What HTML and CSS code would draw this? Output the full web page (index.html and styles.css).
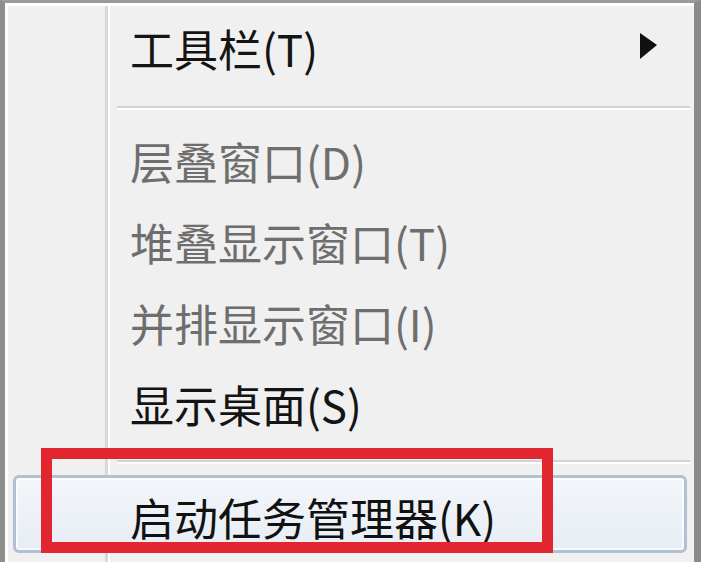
FILE: index.html
```html
<!DOCTYPE html>
<html lang="zh-CN">
<head>
<meta charset="utf-8">
<title>任务栏菜单</title>
<link rel="stylesheet" href="styles.css">
</head>
<body>
<div class="menu">
  <div class="item first">
    <span class="label">工具栏(T)</span>
    <svg class="arrow" width="20" height="30" viewBox="0 0 20 30"><polygon points="2,2 19,14 2,28" fill="#111"/></svg>
  </div>
  <div class="sep"><div class="line"></div></div>
  <div class="item disabled"><span class="label">层叠窗口(D)</span></div>
  <div class="item disabled"><span class="label">堆叠显示窗口(T)</span></div>
  <div class="item disabled"><span class="label">并排显示窗口(I)</span></div>
  <div class="item"><span class="label">显示桌面(S)</span></div>
  <div class="sep sep2"><div class="line"></div></div>
  <div class="item hover"><span class="label">启动任务管理器(K)</span></div>
  <div class="mark"></div>
</div>
</body>
</html>
```

FILE: styles.css
```css
html, body {
  margin: 0;
  padding: 0;
  width: 701px;
  height: 562px;
  overflow: hidden;
  background: #f0f0f0;
}

.menu {
  position: relative;
  box-sizing: border-box;
  width: 701px;
  height: 562px;
  overflow: hidden;
  border-left: 5px solid #8e8e8e;
  border-top: 3px solid #9a9a9a;
  border-right: 7px solid #8a8a8a;
  padding-top: 3px;
  box-shadow: inset 3px 3px 0 #ffffff;
  background:
    linear-gradient(to right,
      transparent 0, transparent 100px,
      #d9d9d9 100px, #d9d9d9 103px,
      #ffffff 103px, #ffffff 105px,
      transparent 105px),
    #f0f0f0;
  font-family: "Noto Sans CJK SC", "Noto Sans", sans-serif;
  font-size: 44px;
  color: #141414;
  display: flex;
  flex-direction: column;
}

.item {
  height: 81px;
  display: flex;
  align-items: center;
  padding-left: 125px;
  padding-right: 30px;
  box-sizing: border-box;
  flex: none;
}

.item.first {
  height: 84px;
  justify-content: space-between;
}

.label {
  line-height: 1;
  white-space: nowrap;
}

.arrow {
  display: block;
  margin-right: 6px;
  margin-top: -4px;
}

.disabled {
  color: #6e6e6e;
}

.sep {
  flex: none;
  padding: 16px 4px 10px 112px;
}

.sep2 {
  padding-bottom: 11px;
}

.line {
  height: 2px;
  background: #d4d4d4;
  border-bottom: 2px solid #ffffff;
}

.item.hover {
  height: 78px;
  margin-left: 8px;
  margin-right: 7px;
  padding-left: 114px;
  border: 3px solid #b2c0d3;
  border-radius: 6px;
  background: linear-gradient(#f3f6fa, #e7edf5);
  box-shadow: inset 0 0 0 2px rgba(255, 255, 255, 0.7);
  color: #111;
}

.item.hover .label {
  margin-top: 6px;
}

.mark {
  position: absolute;
  left: 36px;
  top: 445px;
  width: 512px;
  height: 105px;
  box-sizing: border-box;
  border: 11px solid #e2262f;
}
```
